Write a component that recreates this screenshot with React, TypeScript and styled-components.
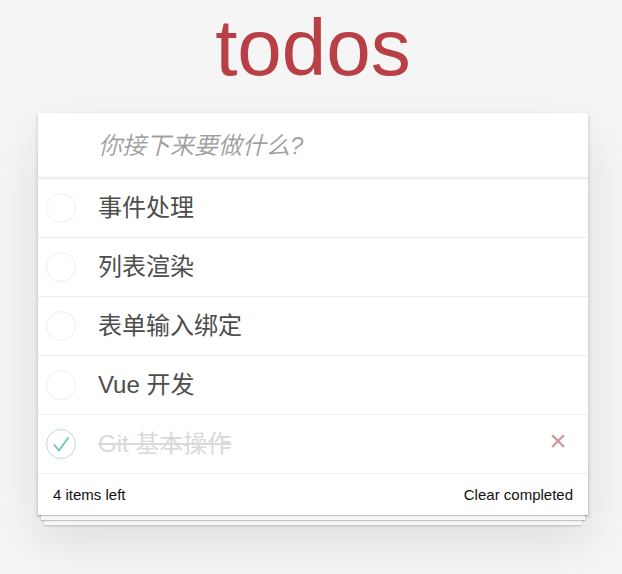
import React from "react";
import styled, { createGlobalStyle, css } from "styled-components";

const GlobalStyle = createGlobalStyle`
  html, body {
    margin: 0;
    padding: 0;
    background: #f5f5f5;
  }
  body {
    font-family: "Liberation Sans", "Noto Sans CJK SC", sans-serif;
    color: #4d4d4d;
    -webkit-font-smoothing: antialiased;
  }
  * { box-sizing: border-box; }
`;

const Page = styled.div`
  min-height: 574px;
  padding: 8px 0 60px 4px;
`;

const TodoApp = styled.section`
  max-width: 550px;
  margin: 0 auto;
`;

const Title = styled.h1`
  margin: 0;
  font-size: 80px;
  line-height: 80px;
  font-weight: normal;
  text-align: center;
  color: #b83f45;
  font-family: "Liberation Sans", sans-serif;
`;

const Card = styled.div`
  margin-top: 25px;
  position: relative;
  background: #fff;
  box-shadow: 0 2px 4px 0 rgba(0, 0, 0, 0.2), 0 25px 50px 0 rgba(0, 0, 0, 0.1);
`;

const NewTodo = styled.input`
  display: block;
  width: 100%;
  margin: 0;
  border: none;
  outline: none;
  background: transparent;
  padding: 16px 16px 16px 60px;
  height: 65px;
  font-family: "Liberation Sans", "Noto Sans CJK SC", sans-serif;
  font-size: 24px;
  line-height: 33px;
  color: #4d4d4d;
  box-shadow: inset 0 -2px 1px rgba(0, 0, 0, 0.03);
  &::placeholder {
    font-style: italic;
    color: rgba(0, 0, 0, 0.38);
  }
`;

const List = styled.ul`
  margin: 0;
  padding: 0;
  list-style: none;
  border-top: 1px solid #e6e6e6;
`;

const Row = styled.li`
  display: flex;
  align-items: center;
  border-bottom: 1px solid #ededed;
`;

const Toggle = styled.span`
  display: flex;
  width: 30px;
  height: 30px;
  margin-left: 8px;
  flex: none;
`;

const Label = styled.label<{ $done?: boolean }>`
  flex: 1;
  margin-left: 22px;
  padding: 15px 15px 15px 0;
  font-size: 24px;
  line-height: 28px;
  color: #4d4d4d;
  white-space: nowrap;
  ${(p) =>
    p.$done &&
    css`
      color: #d9d9d9;
      text-decoration: line-through;
    `}
`;

const Destroy = styled.button`
  flex: none;
  width: 40px;
  height: 40px;
  margin: 0 10px 6px 0;
  padding: 0;
  border: none;
  background: none;
  font-family: "Liberation Sans", sans-serif;
  font-size: 30px;
  line-height: 40px;
  color: #cc9a9a;
  text-align: center;
`;

const Footer = styled.footer`
  position: relative;
  display: flex;
  justify-content: space-between;
  align-items: center;
  height: 41px;
  padding: 10px 15px;
  font-size: 15px;
  line-height: 20px;
  color: #111;
  &::before {
    content: "";
    position: absolute;
    left: 0;
    right: 0;
    bottom: 0;
    height: 50px;
    box-shadow: 0 1px 1px rgba(0, 0, 0, 0.2), 0 8px 0 -3px #f6f6f6,
      0 9px 1px -3px rgba(0, 0, 0, 0.2), 0 16px 0 -6px #f6f6f6,
      0 17px 2px -6px rgba(0, 0, 0, 0.2);
    pointer-events: none;
  }
`;

const Count = styled.span`
  position: relative;
`;

const ClearButton = styled.button`
  position: relative;
  padding: 0;
  border: none;
  background: none;
  font-family: "Liberation Sans", sans-serif;
  font-size: 15px;
  line-height: 20px;
  color: #111;
`;

const Circle = ({ done }: { done: boolean }) => (
  <svg width="30" height="30" viewBox="0 0 30 30">
    <circle
      cx="15"
      cy="15"
      r="14.5"
      fill="none"
      stroke={done ? "#bddad5" : "#ededed"}
      strokeWidth="1"
    />
    {done && (
      <path
        d="M8 15.5 L13 21.5 L22.5 8.5"
        fill="none"
        stroke="#5dc2af"
        strokeWidth="1.6"
      />
    )}
  </svg>
);

const todos = [
  { title: "事件处理", done: false },
  { title: "列表渲染", done: false },
  { title: "表单输入绑定", done: false },
  { title: "Vue 开发", done: false },
  { title: "Git 基本操作", done: true },
];

export default function App() {
  return (
    <>
      <GlobalStyle />
      <Page>
        <TodoApp>
          <Title>todos</Title>
          <Card>
            <NewTodo placeholder="你接下来要做什么?" />
            <List>
              {todos.map((t) => (
                <Row key={t.title}>
                  <Toggle>
                    <Circle done={t.done} />
                  </Toggle>
                  <Label $done={t.done}>{t.title}</Label>
                  {t.done && <Destroy>×</Destroy>}
                </Row>
              ))}
            </List>
            <Footer>
              <Count>4 items left</Count>
              <ClearButton>Clear completed</ClearButton>
            </Footer>
          </Card>
        </TodoApp>
      </Page>
    </>
  );
}
